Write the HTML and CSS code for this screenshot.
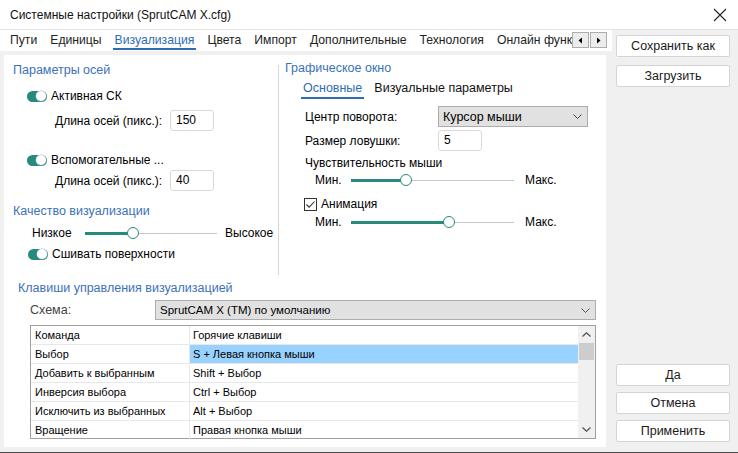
FILE: index.html
```html
<!DOCTYPE html>
<html lang="ru">
<head>
<meta charset="utf-8">
<link rel="stylesheet" href="styles.css">
</head>
<body>
<div class="win">
  <div class="titlebar">
    <span class="title">Системные настройки (SprutCAM X.cfg)</span>
    <svg class="close" width="14" height="14" viewBox="0 0 14 14"><path d="M1 1 L13 13 M13 1 L1 13" stroke="#222" stroke-width="1.1" fill="none"/></svg>
  </div>
  <div class="body">
    <div class="leftside">
      <div class="tabs">
        <span class="tab">Пути</span>
        <span class="tab">Единицы</span>
        <span class="tab active">Визуализация</span>
        <span class="tab">Цвета</span>
        <span class="tab">Импорт</span>
        <span class="tab">Дополнительные</span>
        <span class="tab">Технология</span>
        <span class="tab last">Онлайн функ</span>
        <div class="tabscroll">
          <span class="sbtn"><svg width="5" height="7" viewBox="0 0 5 7"><path d="M4 0.5 L0.5 3.5 L4 6.5Z" fill="#000"/></svg></span>
          <span class="sbtn"><svg width="5" height="7" viewBox="0 0 5 7"><path d="M1 0.5 L4.5 3.5 L1 6.5Z" fill="#000"/></svg></span>
        </div>
      </div>
      <div class="panel">
        <div class="top">
          <div class="colL">
            <div class="heading h1">Параметры осей</div>
            <div class="trow r1"><span class="toggle"></span><span>Активная СК</span></div>
            <div class="lrow r2"><span class="lbl">Длина осей (пикс.):</span><span class="input">150</span></div>
            <div class="trow r3"><span class="toggle"></span><span>Вспомогательные ...</span></div>
            <div class="lrow r4"><span class="lbl">Длина осей (пикс.):</span><span class="input">40</span></div>
            <div class="heading h2">Качество визуализации</div>
            <div class="srow q">
              <span class="smin">Низкое</span>
              <div class="slider w132"><div class="fill" style="width:46px"></div><div class="thumb"></div><div class="rest"></div></div>
              <span class="smax">Высокое</span>
            </div>
            <div class="trow r5"><span class="toggle"></span><span>Сшивать поверхности</span></div>
          </div>
          <div class="sep"></div>
          <div class="colR">
            <div class="heading g1">Графическое окно</div>
            <div class="subtabs">
              <span class="stab active">Основные</span>
              <span class="stab">Визуальные параметры</span>
            </div>
            <div class="frow f1"><span class="flbl">Центр поворота:</span><span class="select sel1">Курсор мыши<svg width="9" height="5" viewBox="0 0 9 5"><path d="M0.5 0.5 L4.5 4.5 L8.5 0.5" stroke="#444" fill="none"/></svg></span></div>
            <div class="frow f2"><span class="flbl">Размер ловушки:</span><span class="input">5</span></div>
            <div class="plain f3">Чувствительность мыши</div>
            <div class="srow m1">
              <span class="mmin">Мин.</span>
              <div class="slider w163"><div class="fill" style="width:53px"></div><div class="thumb"></div><div class="rest"></div></div>
              <span class="mmax">Макс.</span>
            </div>
            <div class="crow">
              <span class="check"><svg width="11" height="11" viewBox="0 0 11 11"><path d="M1.5 5.5 L4.2 8.2 L9.5 2.5" stroke="#333" stroke-width="1.1" fill="none"/></svg></span>
              <span>Анимация</span>
            </div>
            <div class="srow m2">
              <span class="mmin">Мин.</span>
              <div class="slider w163"><div class="fill" style="width:96px"></div><div class="thumb"></div><div class="rest"></div></div>
              <span class="mmax">Макс.</span>
            </div>
          </div>
        </div>
        <div class="bottom">
          <div class="heading k1">Клавиши управления визуализацией</div>
          <div class="schema">
            <span class="slbl">Схема:</span>
            <span class="select sel2">SprutCAM X (TM) по умолчанию<svg width="9" height="5" viewBox="0 0 9 5"><path d="M0.5 0.5 L4.5 4.5 L8.5 0.5" stroke="#555" fill="none"/></svg></span>
          </div>
          <div class="table">
            <div class="rows">
              <div class="tr"><span class="c1">Команда</span><span class="c2">Горячие клавиши</span></div>
              <div class="tr"><span class="c1">Выбор</span><span class="c2 selcell">S + Левая кнопка мыши</span></div>
              <div class="tr"><span class="c1">Добавить к выбранным</span><span class="c2">Shift + Выбор</span></div>
              <div class="tr"><span class="c1">Инверсия выбора</span><span class="c2">Ctrl + Выбор</span></div>
              <div class="tr"><span class="c1">Исключить из выбранных</span><span class="c2">Alt + Выбор</span></div>
              <div class="tr lastrow"><span class="c1">Вращение</span><span class="c2">Правая кнопка мыши</span></div>
            </div>
            <div class="vscroll">
              <span class="arr"><svg width="9" height="5" viewBox="0 0 9 5"><path d="M0.5 4.5 L4.5 0.8 L8.5 4.5" stroke="#555" stroke-width="1.3" fill="none"/></svg></span>
              <span class="sthumb"></span>
              <span class="strack"></span>
              <span class="arr"><svg width="9" height="5" viewBox="0 0 9 5"><path d="M0.5 0.5 L4.5 4.2 L8.5 0.5" stroke="#555" stroke-width="1.3" fill="none"/></svg></span>
            </div>
          </div>
        </div>
      </div>
    </div>
    <div class="rightside">
      <div class="btngroup topg">
        <span class="btn">Сохранить как</span>
        <span class="btn">Загрузить</span>
      </div>
      <div class="btngroup botg">
        <span class="btn">Да</span>
        <span class="btn">Отмена</span>
        <span class="btn">Применить</span>
      </div>
    </div>
  </div>
</div>
</body>
</html>
```
FILE: styles.css
```css
html, body { margin: 0; padding: 0; }
body {
  width: 738px; height: 453px; overflow: hidden;
  font-family: "Liberation Sans", Arial, sans-serif;
  font-size: 12px; color: #000; background: #f0f0f0;
}
.win {
  width: 738px; height: 453px; box-sizing: border-box;
  border-bottom: 1px solid #4a4a4a;
  display: flex; flex-direction: column;
}
.titlebar {
  height: 30px; flex: none; background: #fff;
  border-bottom: 1px solid #e3e3e3;
  display: flex; align-items: center; justify-content: space-between;
  padding: 0 11px 0 10px; box-sizing: border-box;
}
.title { font-size: 12px; color: #111; padding-top: 1px; }
.close { display: block; }
.body { flex: 1; display: flex; min-height: 0; }
.leftside { width: 612px; flex: none; display: flex; flex-direction: column; }
.tabs {
  height: 21px; flex: none; background: #fff; display: flex; align-items: stretch;
  padding-left: 10px; position: relative; overflow: hidden;
}
.tab {
  font-size: 12.2px; line-height: 19px; margin-right: 13px;
  color: #222; white-space: nowrap; padding-top: 1px;
}
.tab.active { color: #2e6db2; border-bottom: 2px solid #2e6db2; height: 17px; padding: 1px 2px 0; margin-left: -2px; margin-right: 11px; }
.tab.last { margin-right: 0; }
.tabscroll {
  display: flex; position: absolute; left: 572px; top: 2px; background: #fff; padding-left: 0;
}
.sbtn {
  width: 17px; height: 16px; box-sizing: border-box; background: #ececec;
  border: 1px solid #adadad; display: flex; align-items: center; justify-content: center;
}
.sbtn + .sbtn { margin-left: 1px; }
.panel {
  flex: 1; margin: 4px 6px 5px 4px; background: #fff;
  display: flex; flex-direction: column;
}
.top { height: 220px; flex: none; display: flex; }
.colL { width: 274px; flex: none; display: flex; flex-direction: column; }
.sep { width: 1px; background: #d6d6d6; margin-top: 10px; flex: none; }
.colR { flex: 1; display: flex; flex-direction: column; }
.heading { color: #3b72b8; font-size: 12.5px; line-height: 20px; height: 20px; white-space: nowrap; }
.h1 { margin-top: 5px; padding-left: 9px; }
.trow { display: flex; align-items: center; height: 20px; padding-left: 23px; gap: 4px; white-space: nowrap; }
.r1 { margin-top: 6px; }
.r3 { margin-top: 19px; }
.r5 { margin-top: 1px; padding-left: 24px; }
.toggle {
  width: 20px; height: 11px; border-radius: 6px; background: #268a7c; position: relative; flex: none;
}
.toggle::after {
  content: ""; position: absolute; right: 1px; top: 0.5px; width: 10px; height: 10px; border-radius: 50%;
  background: #fff; box-shadow: 0 0 0 0.5px #9ab;
}
.lrow { display: flex; align-items: center; height: 21px; padding-left: 51px; }
.r2 { margin-top: 4px; }
.r4 { margin-top: 0; }
.lbl { width: 115px; white-space: nowrap; }
.input {
  width: 44px; height: 21px; box-sizing: border-box; border: 1px solid #d9d9d9; border-radius: 3px;
  padding: 0 5px; line-height: 19px; background: #fff;
}
.h2 { margin-top: 10px; padding-left: 9px; }
.srow { display: flex; align-items: center; white-space: nowrap; }
.q { height: 20px; margin-top: 2px; padding-left: 28px; }
.smin { width: 53px; }
.smax { margin-left: 8px; }
.slider { display: flex; align-items: center; height: 14px; flex: none; }
.w132 { width: 132px; }
.w163 { width: 163px; }
.fill { height: 3px; background: #268a7c; flex: none; }
.thumb {
  width: 12px; height: 12px; box-sizing: border-box; border: 1.5px solid #268a7c; border-radius: 50%;
  background: #fff; flex: none; margin-left: -4px;
}
.rest { flex: 1; height: 1px; background: #c8c8c8; }
.g1 { margin-top: 3px; padding-left: 6px; }
.subtabs { display: flex; padding-left: 24px; margin-top: 2px; height: 19px; }
.stab { font-size: 12.5px; line-height: 17px; margin-right: 12px; white-space: nowrap; color: #111; }
.stab.active { color: #2e6db2; border-bottom: 2px solid #2e6db2; height: 17px; padding: 0 2px; margin-left: -2px; margin-right: 10px; }
.frow { display: flex; align-items: center; height: 21px; padding-left: 26px; white-space: nowrap; }
.f1 { margin-top: 7px; }
.f2 { margin-top: 3px; }
.flbl { width: 133px; }
.select {
  display: flex; align-items: center; justify-content: space-between; box-sizing: border-box;
  background: #e1e1e1; border: 1px solid #adadad; padding: 0 5px 0 4px; white-space: nowrap;
}
.sel1 { width: 150px; height: 21px; font-size: 12.5px; }
.plain { padding-left: 26px; height: 16px; line-height: 16px; white-space: nowrap; }
.f3 { margin-top: 4px; }
.m1 { height: 16px; margin-top: 1px; padding-left: 36px; }
.m2 { height: 16px; margin-top: 2px; padding-left: 36px; }
.mmin { width: 36px; }
.mmax { margin-left: 11px; }
.crow { display: flex; align-items: center; height: 16px; margin-top: 8px; padding-left: 25px; gap: 4px; white-space: nowrap; }
.check {
  width: 13px; height: 13px; box-sizing: border-box; border: 1px solid #333; display: flex;
  align-items: center; justify-content: center; background: #fff;
}
.bottom { flex: 1; display: flex; flex-direction: column; }
.k1 { margin-top: 5px; height: 16px; line-height: 16px; padding-left: 14px; }
.schema { display: flex; align-items: center; height: 20px; margin-top: 4px; padding-left: 26px; }
.slbl { width: 125px; color: #444; font-size: 12.5px; }
.sel2 { width: 441px; height: 20px; font-size: 11.5px; padding-left: 4px; }
.table {
  margin: 5px 0 0 26px; width: 566px; height: 114px; box-sizing: border-box;
  border: 1px solid #a0a0a0; display: flex; background: #fff;
}
.rows { flex: 1; display: flex; flex-direction: column; }
.tr { display: flex; height: 19px; box-sizing: border-box; border-bottom: 1px solid #e8e8e8; font-size: 11px; line-height: 18px; }
.tr.lastrow { border-bottom: none; }
.c1 { width: 159px; box-sizing: border-box; padding-left: 4px; border-right: 1px solid #e8e8e8; white-space: nowrap; flex: none; }
.c2 { flex: 1; padding-left: 3px; white-space: nowrap; }
.selcell { background: #99d1ff; }
.vscroll { width: 17px; flex: none; display: flex; flex-direction: column; background: #f0f0f0; }
.arr { height: 17px; display: flex; align-items: center; justify-content: center; flex: none; }
.sthumb { height: 17px; margin: 0 1px; background: #cdcdcd; flex: none; }
.strack { flex: 1; }
.rightside { flex: 1; display: flex; flex-direction: column; justify-content: space-between; padding: 5px 0 10px 4px; }
.btngroup { display: flex; flex-direction: column; }
.topg { gap: 8px; }
.botg { gap: 6px; }
.btn {
  width: 114px; height: 22px; box-sizing: border-box; background: #fff; border: 1px solid #d5d5d5; border-radius: 2px;
  display: flex; align-items: center; justify-content: center; font-size: 12.5px; color: #1a1a1a;
}
```
